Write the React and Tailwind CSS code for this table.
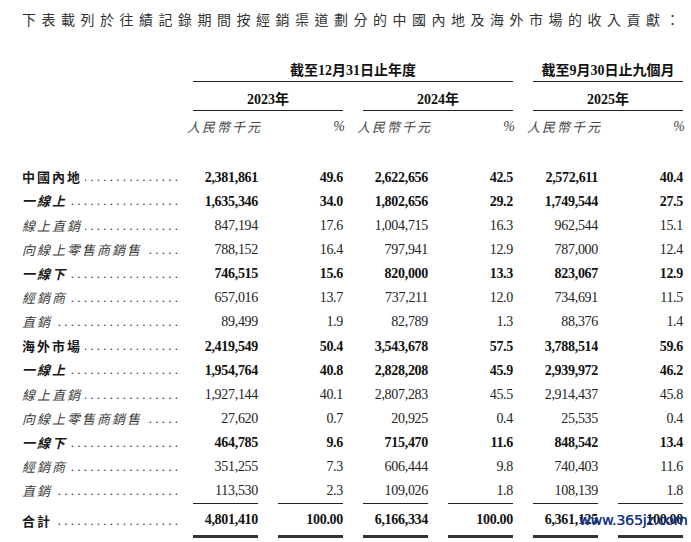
import React from "react";

const rows = [
  ["中國內地", "2,381,861", "49.6", "2,622,656", "42.5", "2,572,611", "40.4", "h"],
  ["一線上", "1,635,346", "34.0", "1,802,656", "29.2", "1,749,544", "27.5", "s"],
  ["線上直銷", "847,194", "17.6", "1,004,715", "16.3", "962,544", "15.1", "i"],
  ["向線上零售商銷售", "788,152", "16.4", "797,941", "12.9", "787,000", "12.4", "i"],
  ["一線下", "746,515", "15.6", "820,000", "13.3", "823,067", "12.9", "s"],
  ["經銷商", "657,016", "13.7", "737,211", "12.0", "734,691", "11.5", "i"],
  ["直銷", "89,499", "1.9", "82,789", "1.3", "88,376", "1.4", "i"],
  ["海外市場", "2,419,549", "50.4", "3,543,678", "57.5", "3,788,514", "59.6", "h"],
  ["一線上", "1,954,764", "40.8", "2,828,208", "45.9", "2,939,972", "46.2", "s"],
  ["線上直銷", "1,927,144", "40.1", "2,807,283", "45.5", "2,914,437", "45.8", "i"],
  ["向線上零售商銷售", "27,620", "0.7", "20,925", "0.4", "25,535", "0.4", "i"],
  ["一線下", "464,785", "9.6", "715,470", "11.6", "848,542", "13.4", "s"],
  ["經銷商", "351,255", "7.3", "606,444", "9.8", "740,403", "11.6", "i"],
  ["直銷", "113,530", "2.3", "109,026", "1.8", "108,139", "1.8", "i"],
];

const DOTS = ". . . . . . . . . . . . . . . . . . . . . . . . . . . . . . . .";

function Label({ text, kind }) {
  const cls =
    kind === "h"
      ? "font-bold not-italic text-[#1a1a1a]"
      : kind === "s"
      ? "font-bold italic text-[#1a1a1a]"
      : "font-normal italic text-[#3a3a3a]";
  return (
    <div className="w-[156px] flex items-center overflow-hidden">
      <span
        className={`shrink-0 whitespace-nowrap text-[13px] tracking-[2px] font-['Noto_Sans_CJK_TC',sans-serif] ${cls}`}
      >
        {text}
      </span>
      <div className="flex-1 min-w-0 flex justify-end overflow-hidden ml-[3px]">
        <span className="shrink-0 whitespace-nowrap font-['Liberation_Serif',serif] text-[13px] text-[#333]">
          {DOTS}
        </span>
      </div>
    </div>
  );
}

function Num({ v, bold, first }) {
  return (
    <div
      className={`${first ? "ml-[15px]" : "ml-[20px]"} w-[65px] text-right whitespace-nowrap font-['Liberation_Serif',serif] text-[14px] tracking-[-0.3px] ${
        bold ? "font-bold text-[#111]" : "font-normal text-[#222]"
      }`}
    >
      {v}
    </div>
  );
}

export default function App() {
  return (
    <div className="relative w-[691px] h-[542px] bg-white overflow-hidden font-['Noto_Sans_CJK_TC',sans-serif]">
      <div className="pl-[22px] pt-[10px] leading-[18px] text-[14px] tracking-[5.5px] text-[#333] whitespace-nowrap">
        下表載列於往績記錄期間按經銷渠道劃分的中國內地及海外市場的收入貢獻：
      </div>

      {/* Header row 1 */}
      <div className="flex pl-[193px] mt-[35px]">
        <div className="w-[320px] border-b border-[#222] pb-[2px] text-center leading-[16px] text-[14px] font-bold text-[#111] font-['Liberation_Serif','Noto_Sans_CJK_TC',serif]">
          截至12月31日止年度
        </div>
        <div className="ml-[20px] w-[150px] border-b border-[#222] pb-[2px] text-center leading-[16px] text-[14px] font-bold text-[#111] font-['Liberation_Serif','Noto_Sans_CJK_TC',serif]">
          截至9月30日止九個月
        </div>
      </div>

      {/* Header row 2 */}
      <div className="flex pl-[193px] pt-[10px]">
        {["2023年", "2024年", "2025年"].map((y, i) => (
          <div
            key={y}
            className={`${i === 0 ? "" : "ml-[20px]"} w-[150px] border-b border-[#222] pb-[2px] text-center leading-[16px] text-[14px] font-bold text-[#111] font-['Liberation_Serif','Noto_Sans_CJK_TC',serif]`}
          >
            {y}
          </div>
        ))}
      </div>

      {/* Header row 3 */}
      <div className="flex pl-[187px] pt-[8px]">
        {[0, 1, 2].map((i) => (
          <div
            key={i}
            className={`${i === 0 ? "" : "ml-[12px]"} w-[158px] flex justify-between items-center leading-[16px]`}
          >
            <span className="italic text-[13px] tracking-[2px] text-[#444] font-['Noto_Sans_CJK_TC',sans-serif]">
              人民幣千元
            </span>
            <span className="italic text-[14px] text-[#444] font-['Liberation_Serif',serif]">%</span>
          </div>
        ))}
      </div>

      {/* Data rows */}
      <div className="mt-[30px] pl-[22px]">
        {rows.map((r, idx) => {
          const bold = r[7] !== "i";
          return (
            <div key={idx} className="flex items-center h-[24.15px]">
              <Label text={r[0]} kind={r[7]} />
              {r.slice(1, 7).map((v, j) => (
                <Num key={j} v={v} bold={bold} first={j === 0} />
              ))}
            </div>
          );
        })}

        {/* Total row */}
        <div className="flex h-[35px]">
          <div className="flex items-center">
            <Label text="合計" kind="h" />
          </div>
          {["4,801,410", "100.00", "6,166,334", "100.00", "6,361,125", "100.00"].map((v, j) => (
            <div
              key={j}
              className={`${j === 0 ? "ml-[15px]" : "ml-[20px]"} w-[65px] h-[35px] flex items-center justify-end border-t border-b-[3px] border-b-double border-t-[#222] border-b-[#333] font-['Liberation_Serif',serif] text-[14px] tracking-[-0.3px] font-bold text-[#111]`}
            >
              {v}
            </div>
          ))}
        </div>
      </div>

      {/* Watermark */}
      <div className="absolute left-[579px] top-[512px] text-[14.5px] leading-[17px] tracking-[-0.4px] text-[#17368c] font-['DejaVu_Sans',sans-serif] whitespace-nowrap [text-shadow:0_0_0.4px_#17368c]">
        www.365jz.com
      </div>
    </div>
  );
}
